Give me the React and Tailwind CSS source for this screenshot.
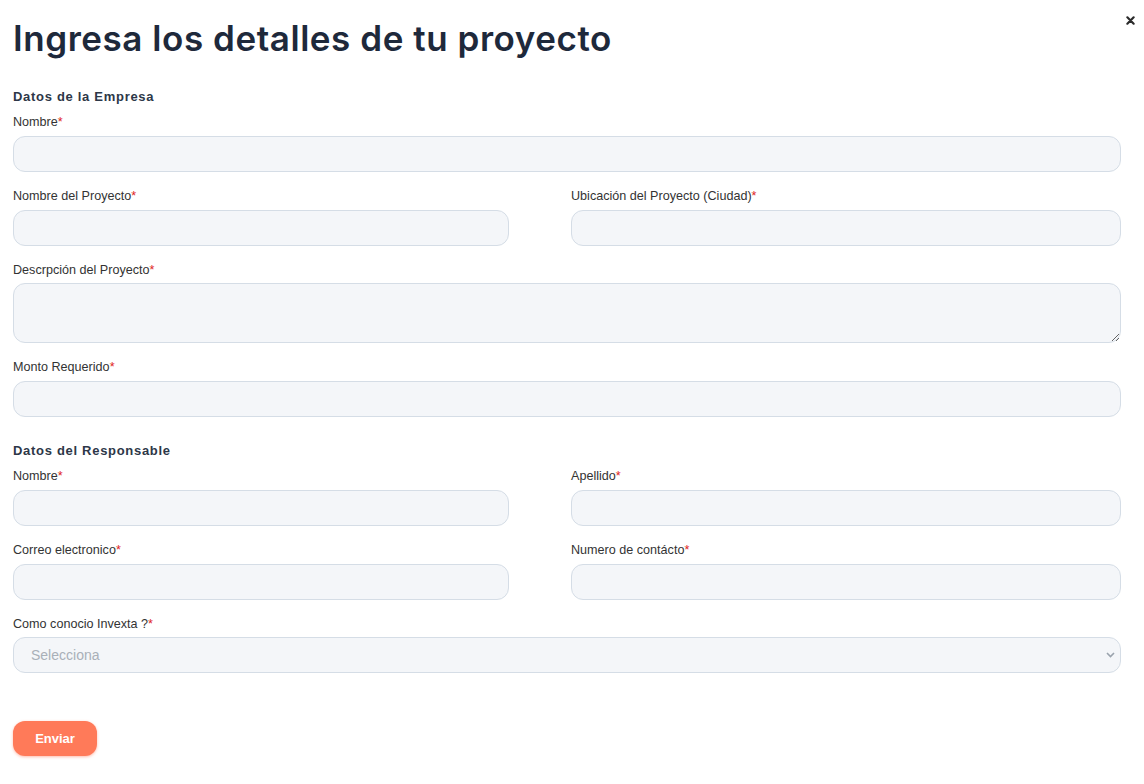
import React from "react";

function Label({ children, tight }) {
  return (
    <label
      className={
        "block h-4 text-[12.6px] leading-4 text-[#333333] " +
        (tight ? "mb-[5px]" : "mb-[6px]")
      }
    >
      {children}
      <span className="text-[#e02424]">*</span>
    </label>
  );
}

function Input() {
  return (
    <input
      type="text"
      className="block w-full h-9 rounded-xl border border-[#d5dde6] bg-[#f4f6f9] px-4 text-[14px] outline-none"
    />
  );
}

function Field({ label, children, tight }) {
  return (
    <div className="flex flex-col">
      <Label tight={tight}>{label}</Label>
      {children || <Input />}
    </div>
  );
}

function SectionTitle({ children }) {
  return (
    <h2 className="h-[18px] mb-2 text-[13px] leading-[18px] font-bold tracking-[0.7px] text-[#2d3748]">
      {children}
    </h2>
  );
}

export default function App() {
  return (
    <div
      className="relative min-h-[784px] w-full bg-white pl-[13px] pr-[23px] pt-[16px]"
      style={{ fontFamily: '"Liberation Sans", Arial, sans-serif' }}
    >
      <button className="absolute right-[8px] top-[14px] flex h-3 w-3 items-center justify-center text-[#222]">
        <svg width="9" height="9" viewBox="0 0 10 10">
          <path d="M1.5 1.5 L8.5 8.5 M8.5 1.5 L1.5 8.5" stroke="#2b2b2b" strokeWidth="2.4" strokeLinecap="round" />
        </svg>
      </button>

      <h1
        className="text-[35px] leading-[44px] font-semibold tracking-[0.55px] text-[#1e293b]"
        style={{ fontFamily: 'Inter, "Noto Sans", sans-serif' }}
      >
        Ingresa los detalles de tu proyecto
      </h1>

      <div className="mt-[28px] flex flex-col">
        <SectionTitle>Datos de la Empresa</SectionTitle>
        <div className="flex flex-col gap-4">
          <Field label="Nombre" />
          <div className="grid grid-cols-[496px_1fr] gap-x-[62px]">
            <Field label="Nombre del Proyecto" />
            <Field label="Ubicación del Proyecto (Ciudad)" />
          </div>
          <Field label="Descrpción del Proyecto" tight>
            <textarea className="block w-full h-[60px] rounded-xl border border-[#d5dde6] bg-[#f4f6f9] px-4 py-2 text-[14px] outline-none" />
          </Field>
          <Field label="Monto Requerido" />
        </div>

        <div className="mt-[25px]">
          <SectionTitle>Datos del Responsable</SectionTitle>
        </div>
        <div className="flex flex-col gap-4">
          <div className="grid grid-cols-[496px_1fr] gap-x-[62px]">
            <Field label="Nombre" />
            <Field label="Apellido" />
          </div>
          <div className="grid grid-cols-[496px_1fr] gap-x-[62px]">
            <Field label="Correo electronico" />
            <Field label="Numero de contácto" />
          </div>
          <Field label="Como conocio Invexta ?" tight>
            <div className="relative">
              <select
                defaultValue=""
                className="block w-full h-9 appearance-none rounded-xl border border-[#d5dde6] bg-[#f4f6f9] pl-[17px] pr-8 text-[14px] text-[#a9b0b8] outline-none"
                style={{ fontFamily: '"Liberation Sans", Arial, sans-serif' }}
              >
                <option value="" disabled>
                  Selecciona
                </option>
              </select>
              <svg
                className="pointer-events-none absolute right-[6px] top-[15px]"
                width="9"
                height="6"
                viewBox="0 0 9 6"
              >
                <path d="M1 1 L4.5 4.5 L8 1" fill="none" stroke="#9aa3ad" strokeWidth="1.6" />
              </svg>
            </div>
          </Field>
        </div>

        <div className="mt-[48px]">
          <button className="h-[35px] w-[84px] rounded-xl bg-[#ff7a59] text-[13px] font-bold text-white shadow-[0_1px_3px_rgba(255,122,89,0.5)]">
            Enviar
          </button>
        </div>
      </div>
    </div>
  );
}
